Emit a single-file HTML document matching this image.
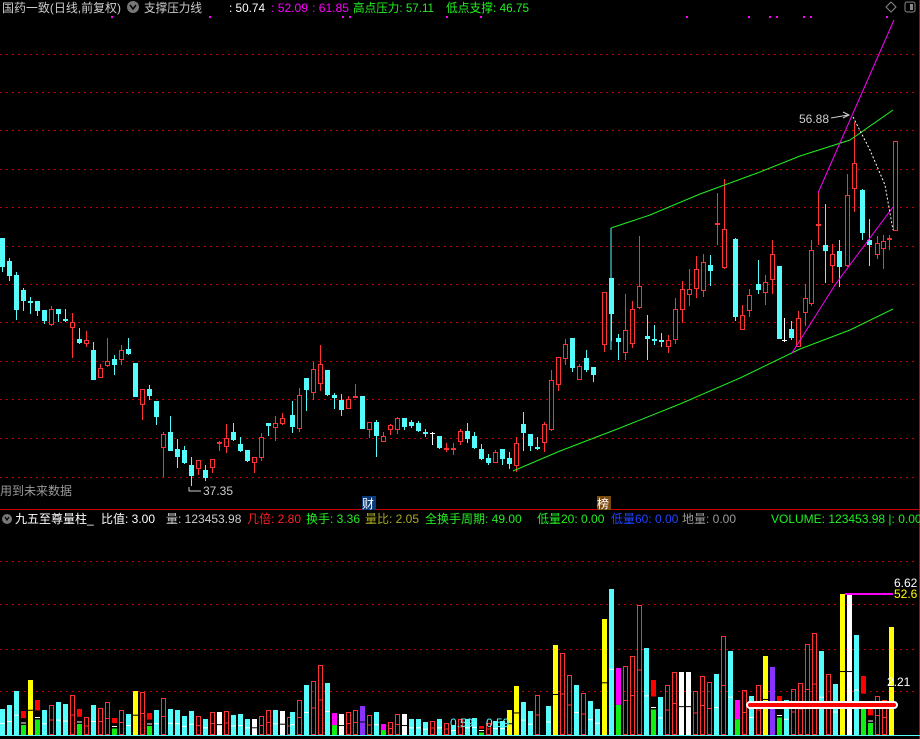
<!DOCTYPE html>
<html><head><meta charset="utf-8"><style>
html,body{margin:0;padding:0;background:#000;width:920px;height:739px;overflow:hidden}
svg{display:block}
text{font-family:"Liberation Sans","Noto Sans CJK SC",sans-serif;font-size:12px}
</style></head><body>
<svg id="s" width="920" height="739" xmlns="http://www.w3.org/2000/svg">
<rect width="920" height="739" fill="#000"/>
<g id="grid" stroke="#c00000" stroke-width="1" stroke-dasharray="2,4"></g>
<line x1="0" y1="509.5" x2="920" y2="509.5" stroke="#d00000"/>
<line x1="919.5" y1="0" x2="919.5" y2="739" stroke="#d00000"/>
<line x1="0" y1="735.5" x2="920" y2="735.5" stroke="#54fcfc"/>
<g id="cd"></g>
<g id="vol"></g>
<polyline points="611,228 611,350" stroke="#54fcfc" fill="none"/>
<polyline points="611,228 650,215 700,194 760,172 800,156 850,140 893,110" stroke="#22ee22" fill="none"/>
<polyline points="513,471 560,451 620,428 680,404 740,378 800,349 850,330 893,309" stroke="#22ee22" fill="none"/>
<polyline points="792,353 835,285 893,207" stroke="#ff00ff" fill="none"/>
<polyline points="818,193 850,120 894,20" stroke="#ff00ff" fill="none"/>
<polyline points="853,117 870,150 885,185 893,230" stroke="#fff" stroke-dasharray="2,2" fill="none"/>
<text x="799" y="123" fill="#ccc">56.88</text>
<polyline points="831,118 848,115" stroke="#ccc" fill="none"/><polyline points="843,112 849,115 843,118" stroke="#ccc" fill="none"/>
<text x="203" y="495" fill="#ccc">37.35</text>
<polyline points="189,487 189,491 201,491" stroke="#ccc" fill="none"/>
<text x="0" y="495" fill="#999">用到未来数据</text>
<rect x="362" y="496" width="14" height="14" fill="#0a3a7a"/><text x="362" y="508" fill="#fff">财</text>
<rect x="597" y="496" width="14" height="14" fill="#7a4a10"/><text x="597" y="508" fill="#fff">榜</text>
<text x="2" y="12" fill="#ccc" textLength="119" lengthAdjust="spacingAndGlyphs">国药一致(日线,前复权)</text>
<circle cx="133" cy="7" r="6" fill="#777"/><polyline points="130,5 133,9 136,5" stroke="#000" stroke-width="1.5" fill="none"/>
<text x="144" y="12" fill="#ccc" textLength="58" lengthAdjust="spacingAndGlyphs">支撑压力线</text>
<text x="229" y="12" fill="#fff" textLength="36" lengthAdjust="spacingAndGlyphs">: 50.74</text>
<text x="271" y="12" fill="#ff00ff" textLength="37" lengthAdjust="spacingAndGlyphs">: 52.09</text>
<text x="312" y="12" fill="#ff00ff" textLength="37" lengthAdjust="spacingAndGlyphs">: 61.85</text>
<text x="353" y="12" fill="#22ee22" textLength="81" lengthAdjust="spacingAndGlyphs">高点压力: 57.11</text>
<text x="446" y="12" fill="#22ee22" textLength="83" lengthAdjust="spacingAndGlyphs">低点支撑: 46.75</text>
<g fill="#ff00ff"><rect x="111" y="16" width="2" height="2"/><rect x="209" y="16" width="2" height="2"/><rect x="342" y="16" width="2" height="2"/><rect x="349" y="16" width="2" height="2"/><rect x="446" y="16" width="2" height="2"/><rect x="480" y="16" width="2" height="2"/><rect x="686" y="16" width="2" height="2"/><rect x="748" y="16" width="2" height="2"/><rect x="769" y="16" width="2" height="2"/><rect x="776" y="16" width="2" height="2"/><rect x="803" y="16" width="2" height="2"/><rect x="810" y="16" width="2" height="2"/><rect x="886" y="16" width="2" height="2"/></g>
<polygon points="891,2 896,7 891,12 886,7" stroke="#888" fill="none"/>
<rect x="905" y="2" width="10" height="10" rx="2" stroke="#888" fill="none"/><rect x="910" y="4" width="3" height="6" fill="#888"/>
<circle cx="7" cy="519" r="5" fill="#777"/><polyline points="5,517 7,520 9,517" stroke="#000" stroke-width="1.2" fill="none"/>
<text x="15" y="523" fill="#fff">九五至尊量柱_</text>
<text x="101" y="523" fill="#fff">比值: 3.00</text>
<text x="166" y="523" fill="#ccc">量: 123453.98</text>
<text x="247" y="523" fill="#ff2020">几倍: 2.80</text>
<text x="306" y="523" fill="#22ee22">换手: 3.36</text>
<text x="365" y="523" fill="#aaaa22">量比: 2.05</text>
<text x="425" y="523" fill="#22ee22">全换手周期: 49.00</text>
<text x="537" y="523" fill="#22ee22">低量20: 0.00</text>
<text x="611" y="523" fill="#2244ff">低量60: 0.00</text>
<text x="682" y="523" fill="#999">地量: 0.00</text>
<text x="771" y="523" fill="#22ee22">VOLUME: 123453.98 |: 0.00</text>
<line x1="845" y1="594" x2="893" y2="594" stroke="#ff00ff" stroke-width="2"/>
<text x="894" y="587" fill="#fff">6.62</text>
<text x="894" y="598" fill="#ffff00">52.6</text>
<text x="887" y="686" fill="#fff">2.21</text>
<text x="450" y="727" fill="#54fcfc">0.59</text>
<text x="486" y="727" fill="#54fcfc">0.59</text>
<rect x="747" y="702" width="150" height="6" rx="3" fill="#ff0000" stroke="#fff" stroke-width="2"/>
</svg>
<script>
var NS="http://www.w3.org/2000/svg";
function el(p,t,a){var e=document.createElementNS(NS,t);for(var k in a)e.setAttribute(k,a[k]);p.appendChild(e);return e;}
var g=document.getElementById('grid');
[54,92,130,169,207,246,284,322,361,399,438,477,561,604,649,691].forEach(function(y){el(g,'line',{x1:0,y1:y+.5,x2:918,y2:y+.5});});
var C={c:'#54fcfc',r:'#ff3333',w:'#ffffff'};
var cd=[
[0,238,267,238,272,'c'],[7,261,276,258,281,'c'],[14,275,310,272,320,'c'],[21,290,301,288,311,'c'],[28,301,303,297,314,'c'],[35,301,311,301,316,'c'],[42,310,321,310,324,'c'],[49,309,325,306,326,'r'],[56,309,314,309,322,'c'],[63,319,321,309,322,'c'],[70,322,328,313,358,'r'],[77,339,343,328,344,'c'],[84,340,344,331,347,'r'],[91,350,380,342,380,'c'],[98,368,378,364,378,'r'],[105,361,366,338,367,'r'],[112,359,365,355,375,'c'],[119,350,360,345,365,'r'],[126,349,354,338,355,'c'],[133,363,397,363,397,'c'],[140,389,405,389,420,'r'],[147,389,396,385,400,'c'],[154,401,417,401,425,'c'],[161,434,448,432,477,'r'],[168,432,451,416,451,'c'],[175,449,457,439,468,'c'],[182,450,463,446,464,'c'],[189,465,476,457,486,'c'],[196,460,469,460,475,'r'],[203,470,478,465,481,'c'],[210,459,468,459,473,'r'],[217,442,443,441,451,'r'],[224,438,447,424,453,'r'],[231,432,440,423,441,'c'],[238,444,451,437,452,'c'],[245,450,461,450,462,'c'],[252,457,463,457,473,'r'],[259,437,458,433,461,'r'],[266,423,426,423,436,'c'],[273,423,428,416,441,'r'],[280,418,424,413,425,'r'],
[290,415,427,401,433,'c'],[297,395,429,388,432,'r'],[304,378,390,378,411,'c'],[311,369,393,362,400,'r'],[318,364,384,345,391,'r'],[325,370,395,370,396,'c'],[332,395,398,393,409,'c'],[339,400,410,394,416,'c'],[346,399,409,396,409,'r'],[353,396,397,384,398,'r'],[360,396,429,396,429,'c'],[367,422,430,422,438,'r'],[374,422,436,420,457,'c'],[381,436,442,432,442,'r'],[388,425,430,424,435,'r'],[395,418,430,417,434,'r'],[402,418,427,418,430,'c'],[409,422,426,420,428,'c'],[416,423,431,421,432,'c'],[423,432,434,429,437,'c'],[430,433,434,432,445,'w'],[437,436,448,436,449,'c'],[444,448,449,443,452,'r'],[451,448,449,443,455,'r'],[458,431,442,429,445,'r'],[465,431,439,423,443,'c'],[472,436,448,432,449,'c'],[479,449,459,444,460,'c'],[486,458,463,454,465,'c'],[493,452,463,450,463,'r'],[500,449,459,449,465,'c'],[507,458,464,452,469,'c'],[514,443,466,437,472,'r'],[521,424,433,412,451,'c'],[528,434,446,434,451,'c'],[535,447,449,437,450,'c'],[542,424,443,422,452,'r'],[549,380,430,370,431,'r'],[556,357,385,357,391,'r'],[563,344,359,339,365,'r'],[570,338,368,338,372,'c'],[577,366,380,364,380,'r'],[584,358,370,350,372,'c'],[591,367,375,367,382,'c'],
[602,292,345,292,352,'r'],[609,278,314,278,341,'c'],[616,338,342,334,360,'c'],[623,330,353,294,360,'r'],[630,309,344,301,348,'r'],[637,286,308,236,309,'r'],[645,336,339,315,360,'c'],[652,339,341,325,345,'c'],[659,340,342,333,347,'c'],[666,340,347,335,353,'r'],[673,309,340,298,344,'r'],[680,289,310,281,323,'r'],[687,289,295,269,306,'r'],[694,269,289,256,298,'r'],[701,262,291,254,297,'r'],[708,265,271,255,286,'c'],[715,223,224,193,245,'r'],[722,229,268,179,269,'r'],[733,239,317,238,321,'c'],[740,315,330,305,329,'r'],[747,295,311,289,317,'r'],[756,284,290,260,294,'c'],[763,282,293,275,305,'r'],[770,254,280,240,294,'r'],[777,266,339,266,339,'c'],[782,340,341,318,342,'w'],[789,329,338,321,340,'c'],[796,318,347,311,346,'r'],[803,298,313,284,326,'r'],[809,250,304,240,306,'r'],[816,224,225,193,245,'r'],[823,245,251,204,283,'c'],[830,254,266,244,283,'r'],[837,251,267,240,287,'c'],[845,195,266,174,267,'r'],[852,163,189,122,212,'r'],[860,190,233,189,240,'c'],[867,240,245,219,266,'c'],[875,243,255,236,259,'r'],[881,241,249,235,269,'r'],[887,238,240,235,250,'r'],[893,141,231,141,231,'r']];
var G=document.getElementById('cd');
cd.forEach(function(d){var x=d[0],t=d[1],b=d[2],h=d[3],l=d[4],c=C[d[5]];var cx=x+2.5;
el(G,'line',{x1:cx,y1:h,x2:cx,y2:t,stroke:c});el(G,'line',{x1:cx,y1:b,x2:cx,y2:l,stroke:c});
if(d[5]=='r'){el(G,'rect',{x:x+.5,y:t+.5,width:4,height:Math.max(b-t-1,1),fill:'#000',stroke:c});}
else{el(G,'rect',{x:x,y:t,width:5,height:Math.max(b-t,1),fill:c});}});
var V=[[0,709,'c'],[7,705,'c'],[14,691,'c'],[21,711,'s'],[28,680,'y'],[35,700,'s'],[42,710,'c'],[49,705,'r'],[56,702,'c'],[63,704,'c'],[70,695,'r'],[77,709,'s'],[84,717,'r'],[91,705,'c'],[98,708,'r'],[105,702,'r'],[112,718,'s'],[119,710,'r'],[126,714,'c'],[133,691,'y'],[140,692,'r'],[147,713,'s'],[154,710,'c'],[161,698,'r'],[168,709,'c'],[175,710,'c'],[182,716,'c'],[189,711,'c'],[196,716,'r'],[203,719,'c'],[210,712,'r'],[217,712,'w'],[224,711,'r'],[231,715,'c'],[238,714,'c'],[245,719,'c'],[252,719,'w'],[259,716,'r'],[266,710,'r'],[273,710,'c'],[280,711,'w'],[287,717,'r'],
[290,712,'c'],[297,700,'r'],[304,685,'c'],[311,681,'r'],[318,665,'r'],[325,683,'c'],[332,713,'m'],[339,714,'w'],[346,712,'r'],[353,710,'r'],[360,706,'p'],[367,715,'r'],[374,712,'c'],[381,724,'m'],[388,722,'r'],[395,714,'r'],[402,714,'w'],[409,719,'c'],[416,719,'c'],[423,722,'c'],[430,721,'r'],[437,719,'c'],[444,723,'r'],[451,725,'c'],[458,719,'r'],[465,719,'c'],[472,718,'c'],[479,726,'s'],[486,723,'r'],[493,721,'c'],[500,721,'c'],[507,710,'y'],[514,686,'y'],[521,702,'c'],[528,711,'c'],[535,695,'r'],[546,706,'c'],[553,645,'y'],[560,653,'r'],[567,675,'r'],[574,685,'c'],[581,693,'r'],[588,701,'c'],[595,709,'c'],[602,619,'y'],[609,589,'c'],[616,668,'m'],[623,666,'r'],[630,656,'r'],[637,605,'r'],[644,648,'c'],[651,680,'s'],[658,697,'c'],[665,685,'r'],[672,672,'r'],[679,672,'w'],[686,672,'w'],[693,691,'r'],[700,676,'r'],[707,682,'r'],[714,674,'c'],[721,636,'r'],[728,651,'c'],[735,700,'m'],[742,690,'r'],[749,696,'c'],[756,685,'r'],[763,656,'y'],[770,667,'p'],[777,696,'s'],[784,700,'c'],[791,689,'r'],[798,683,'r'],[805,644,'r'],[812,633,'r'],[819,651,'c'],[826,674,'r'],[833,684,'c'],[840,594,'y'],[847,594,'w'],[854,635,'c'],[861,676,'s'],[868,707,'s'],[875,696,'r'],[882,700,'r'],[889,627,'y']];
var VG=document.getElementById('vol'),B=735;
var col={c:'#54fcfc',y:'#ffff00',w:'#ffffff',p:'#8833ff'};
V.forEach(function(d){var x=d[0],t=d[1],k=d[2];
if(k=='r'){el(VG,'rect',{x:x+.5,y:t+.5,width:4,height:B-t-1,fill:'none',stroke:'#ff3333'});el(VG,'line',{x1:x+1,y1:(t+B)/2,x2:x+4,y2:(t+B)/2,stroke:'#ff3333'});}
else if(k=='s'){var m=(t+B)/2;el(VG,'rect',{x:x,y:t,width:5,height:(m-t)*0.6,fill:'#ff0000'});el(VG,'rect',{x:x,y:m+2,width:5,height:B-m-2,fill:'#11ee11'});el(VG,'line',{x1:x,y1:m,x2:x+5,y2:m,stroke:'#fff'});}
else if(k=='m'){var m=t+(B-t)*0.55;el(VG,'rect',{x:x,y:t,width:5,height:m-t,fill:'#ff00ff'});el(VG,'rect',{x:x,y:m,width:5,height:B-m,fill:'#11ee11'});}
else{el(VG,'rect',{x:x,y:t,width:5,height:B-t,fill:col[k]});el(VG,'line',{x1:x,y1:t+(B-t)*0.55,x2:x+5,y2:t+(B-t)*0.55,stroke:k=='c'?'#fff':'#000'});}});
</script>
</body></html>
